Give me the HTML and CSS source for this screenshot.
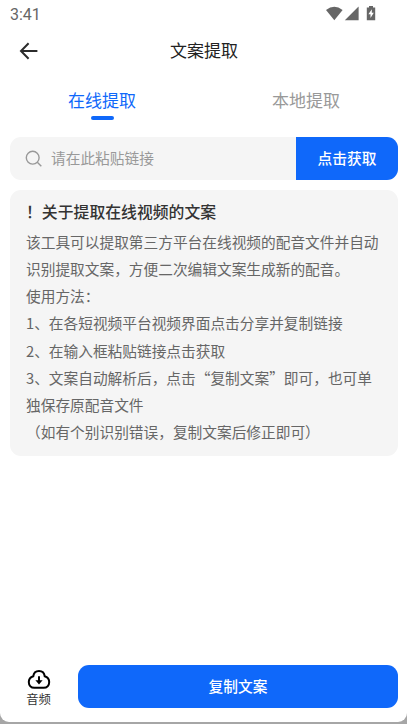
FILE: index.html
```html
<!DOCTYPE html>
<html lang="zh-CN">

<head>
    <meta charset="UTF-8">
    <meta name="viewport" content="width=device-width, initial-scale=1.0">
    <title>文案提取</title>
    <link rel="stylesheet" href="styles.css">
</head>

<body>
    <div class="screen">
        <!-- Status bar -->
        <div class="status-bar">
            <span class="clock">3:41</span>
            <svg class="status-icons" width="51" height="16" viewBox="0 0 51 16">
                <path d="M0 4Q8.3 -2.6 16.6 4L8.3 14.2Z" />
                <path d="M32.6 0.5V14.3H18.8Z" />
                <path d="M43 0h4v1.4h2.2v12.9h-8.4V1.4H43Z" />
                <path class="bolt" d="M45.8 3.2L42.4 8.2h2.1v3.8l3.3-5.2h-2Z" />
            </svg>
        </div>

        <header class="title-bar">
            <svg class="back" width="20" height="18" viewBox="0 0 20 18">
                <path d="M9.6 1.3L2 9l7.6 7.7M2 9h16.4" />
            </svg>
            <h1>文案提取</h1>
        </header>

        <nav class="tabs">
            <a class="tab active">在线提取</a>
            <a class="tab">本地提取</a>
        </nav>

        <div class="search">
            <svg class="search-icon" width="18" height="18" viewBox="0 0 18 18">
                <circle cx="7.7" cy="7.7" r="6.4" />
                <path d="M12.3 12.3L16.3 16.2" />
            </svg>
            <span class="placeholder">请在此粘贴链接</span>
            <button class="fetch">点击获取</button>
        </div>

        <!-- Usage notes -->
        <section class="tips">
            <h2>！关于提取在线视频的文案</h2>
            <p>该工具可以提取第三方平台在线视频的配音文件并自动识别提取文案，方便二次编辑文案生成新的配音。</p>
            <p>使用方法：</p>
            <p>1、在各短视频平台视频界面点击分享并复制链接</p>
            <p>2、在输入框粘贴链接点击获取</p>
            <p>3、文案自动解析后，点击“复制文案”即可，也可单独保存原配音文件</p>
            <p>（如有个别识别错误，复制文案后修正即可）</p>
        </section>

        <footer class="actions">
            <div class="audio">
                <svg width="24" height="21" viewBox="0 0 24 21">
                    <path class="cloud" d="M6.3 7.2C6.7 3.9 9 2 12 2s5.3 1.9 5.7 5.2c2.7.9 4.5 2.9 4.5 5.8 0 3.6-2.3 5.8-5.5 5.8H7.3c-3.2 0-5.5-2.2-5.5-5.8 0-2.9 1.8-4.9 4.5-5.8Z" />
                    <path class="stem" d="M12 7.2v6" />
                    <path class="head" d="M8.4 11.3h7.2L12 15.6Z" />
                </svg>
                <span>音频</span>
            </div>
            <button class="copy">复制文案</button>
        </footer>
    </div>
</body>

</html>
```
FILE: styles.css
```css
* {
    box-sizing: border-box;
}

body {
    margin: 0;
    background-color: #a6a6a6;
    font-family: "Noto Sans CJK SC", sans-serif;
}

.screen {
    display: flex;
    flex-direction: column;
    height: 722px;
    padding: 0 9px 14px 10px;
    background-color: #fff;
    border-radius: 0 0 9px 9px;
}

/* Status bar */
.status-bar {
    display: flex;
    justify-content: space-between;
    height: 28px;
    padding: 6px 21px 0 0;
}

.clock {
    font: 16px/17px Roboto, sans-serif;
    color: #666;
}

.status-icons {
    fill: #666;
}

.status-icons .bolt {
    fill: #fff;
}

/* Title bar */
.title-bar {
    display: grid;
    grid-template-columns: 38px 1fr 38px;
    align-items: center;
    height: 46px;
}

.back {
    margin-left: 9px;
    fill: none;
    stroke: #2b2b2b;
    stroke-width: 2;
}

h1 {
    margin: 0;
    padding-bottom: 2px;
    font-size: 17px;
    font-weight: 400;
    line-height: 26px;
    text-align: center;
    color: #222;
}

/* Tabs */
.tabs {
    display: flex;
    height: 63px;
    margin: 0 -10px;
}

.tab {
    display: flex;
    flex: 1;
    flex-direction: column;
    align-items: center;
    padding-top: 13px;
    font-size: 17px;
    line-height: 26px;
    color: #999;
}

.tab.active {
    color: #0f68fa;
}

.tab.active::after {
    content: "";
    width: 23px;
    height: 4px;
    margin-top: 3px;
    border-radius: 2px;
    background-color: #0f68fa;
}

/* Link input */
.search {
    display: flex;
    align-items: center;
    height: 43px;
    padding-left: 15px;
    border-radius: 11px;
    background-color: #f5f5f5;
    overflow: hidden;
}

.search-icon {
    fill: none;
    stroke: #999;
    stroke-width: 1.4;
}

.placeholder {
    flex: 1;
    margin-left: 8px;
    padding-bottom: 2px;
    font-size: 14.7px;
    line-height: 22px;
    color: #999;
}

button {
    padding: 0 0 2px;
    border: 0;
    font: 500 14.7px/22px "Noto Sans CJK SC", sans-serif;
    color: #fff;
    background-color: #0f68fa;
}

.fetch {
    width: 102px;
    height: 43px;
}

/* Usage notes */
.tips {
    height: 266px;
    margin-top: 10px;
    padding: 9px 16px 0;
    border-radius: 11px;
    background-color: #f5f5f5;
}

h2 {
    margin: 0 0 4px;
    font-size: 15.85px;
    font-weight: 500;
    line-height: 25px;
    color: #333;
}

p {
    margin: 0;
    font-size: 14.7px;
    line-height: 27.13px;
    color: #666;
}

/* Bottom actions */
.actions {
    display: flex;
    align-items: center;
    margin-top: auto;
}

.audio {
    display: flex;
    flex-direction: column;
    align-items: center;
    width: 68px;
    padding: 3px 11px 0 0;
    font-size: 12.3px;
    line-height: 18px;
    color: #333;
}

.audio .cloud {
    fill: none;
    stroke: #000;
    stroke-width: 2;
}

.audio .stem {
    stroke: #000;
    stroke-width: 2;
}

.copy {
    flex: 1;
    height: 43px;
    border-radius: 11px;
}
```
